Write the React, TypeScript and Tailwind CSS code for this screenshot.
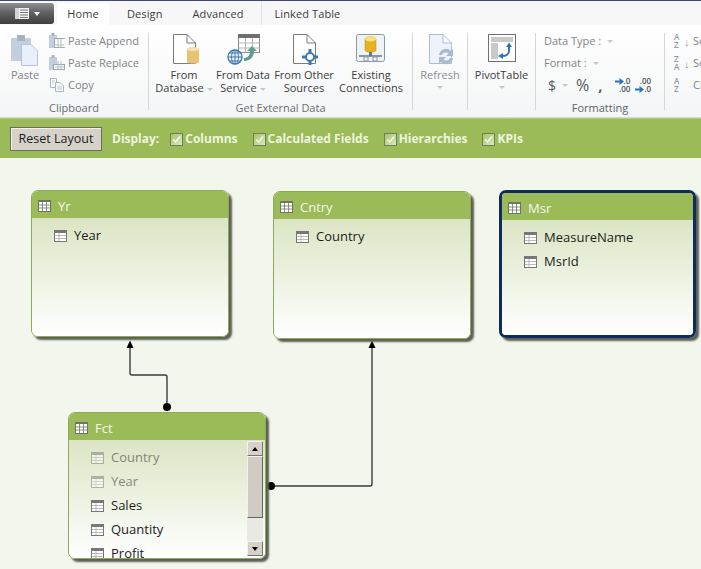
import type { ReactNode } from "react";

const font = { fontFamily: '"Open Sans", "Noto Sans", sans-serif' };

const PageIcon = ({ children, faded }: { children?: ReactNode; faded?: boolean }) => (
  <svg width="31" height="34" viewBox="0 0 31 34" className="block">
    <path
      d="M4.5 1.5H18L26.5 10V30.5H4.5Z M18 1.5V10H26.5"
      fill={faded ? "#eef3fb" : "#fff"}
      stroke={faded ? "#a9bcd8" : "#7c7c7c"}
    />
    {children}
  </svg>
);

const FromDatabaseIcon = () => (
  <PageIcon>
    <path d="M18 16C18 14 30 14 30 16V29C30 31 18 31 18 29Z" fill="#e9c273" />
    <ellipse cx="24" cy="16" rx="6" ry="2" fill="#f5e2b4" />
  </PageIcon>
);

const DataServiceIcon = () => (
  <svg width="38" height="34" viewBox="-2 0 38 34" className="block">
    <rect x="12.5" y="1.5" width="21" height="18" fill="#fff" stroke="#8a8a8a" />
    <rect x="12" y="1" width="22" height="4" fill="#6e6e6e" />
    <path d="M12.5 10H33.5M12.5 15H33.5M19.5 5V19.5M26.5 5V19.5" stroke="#b5b5b5" />
    <circle cx="9" cy="24" r="7" fill="#eaf2fb" stroke="#3f78b0" strokeWidth="1.3" />
    <path d="M2 24H16M9 17V31M4 20H14M4 28H14" stroke="#3f78b0" />
    <ellipse cx="9" cy="24" rx="3.5" ry="7" fill="none" stroke="#3f78b0" />
    <path d="M18 25C22 25 24 22 24 18H21L26 13L31 18H28C28 24 24 28 18 28Z" fill="#5e9c8c" />
  </svg>
);

const OtherSourcesIcon = () => (
  <PageIcon>
    <circle cx="21" cy="24" r="4" fill="#fff" stroke="#3f78b0" strokeWidth="2" />
    <path d="M21 16V20M21 28V32M13 24H17M25 24H29" stroke="#3f78b0" strokeWidth="3" />
  </PageIcon>
);

const ConnectionsIcon = () => (
  <svg width="32" height="32" viewBox="0 0 32 32" className="block mb-[2px]">
    <rect x="1.5" y="1.5" width="28" height="27" rx="2" fill="#eef3f8" stroke="#8a97a6" />
    <path d="M10 6C10 3 21 3 21 6V17C21 20 10 20 10 17Z" fill="#e6b21f" stroke="#b58a10" strokeWidth="0.5" />
    <ellipse cx="15.5" cy="6" rx="5.5" ry="2.4" fill="#f7e27d" />
    <rect x="14" y="19" width="3" height="4" fill="#6b7785" />
    <path d="M4 23H27" stroke="#6b7785" strokeWidth="1.5" />
    <rect x="9" y="24" width="4" height="4" fill="none" stroke="#8a97a6" />
    <rect x="18" y="24" width="4" height="4" fill="none" stroke="#8a97a6" />
  </svg>
);

const RefreshIcon = () => (
  <PageIcon faded>
    <path d="M14 22A7 7 0 0 1 26 18L28 16V23H21L23.5 20.5A4 4 0 0 0 17 22Z" fill="#a9bbcc" />
    <path d="M28 25A7 7 0 0 1 16 29L14 31V24H21L18.5 26.5A4 4 0 0 0 25 25Z" fill="#a9bbcc" />
  </PageIcon>
);

const PivotIcon = () => (
  <svg width="30" height="30" viewBox="0 0 30 30" className="block mb-[4px]">
    <rect x="1.5" y="1.5" width="27" height="27" fill="#fff" stroke="#6f6f6f" />
    <rect x="4" y="4" width="22" height="5" fill="#c9c9c9" />
    <rect x="4" y="10" width="7" height="16" fill="#c9c9c9" />
    <path d="M22 12V18C22 21 19 23 15 23" fill="none" stroke="#2e74b5" strokeWidth="2" />
    <path d="M19 14L22 9.500L25 14ZM16 20V26L11 23Z" fill="#2e74b5" />
  </svg>
);

const PasteIcon = () => (
  <svg width="28" height="31" viewBox="0 0 28 31" className="block">
    <rect x="0" y="3" width="20" height="23" fill="#c3cfde" />
    <rect x="6" y="0" width="8" height="6" fill="#a6b3c4" />
    <path d="M10.500 9.500H20L26.500 16V30.500H10.500Z" fill="#e9f0fa" stroke="#b4c4da" />
  </svg>
);

const SmallPasteIcon = ({ replace }: { replace?: boolean }) => (
  <svg width="16" height="16" viewBox="0 0 16 16" className="block">
    <rect x="0" y="2" width="8" height="13" fill="#c3cfde" />
    <rect x="2.500" y="0" width="3" height="3" fill="#a6b3c4" />
    <rect x={replace ? 4.500 : 5.500} y={replace ? 9.500 : 5.500} width="11" height={replace ? 5 : 9} fill="#fff" stroke="#9aa6b5" />
    <path d="M5.500 12H15M9 6V14.500M12 6V14.500" stroke="#b4bcc6" />
  </svg>
);

const CopyIcon = () => (
  <svg width="16" height="16" viewBox="0 0 16 16" className="block">
    <path d="M1.500 1.500H7.500V10.500H1.500Z" fill="#fff" stroke="#a8b6c8" />
    <path d="M6.500 5.500H11L14.500 9V14.500H6.500Z" fill="#fff" stroke="#a8b6c8" />
    <path d="M8 10H13M8 12H13M3 4H6M3 6H5" stroke="#b8c4d2" />
  </svg>
);

const Caret = () => (
  <span className="inline-block w-0 h-0 border-x-[3px] border-x-transparent border-t-[3px] border-t-[#c4c8cc]" />
);

const SmallArrow = () => (
  <svg width="9" height="7" viewBox="0 0 9 7" className="block shrink-0">
    <path d="M0 2.500H4.500V0L9 3.500L4.500 7V4.500H0Z" fill="#2e74b5" />
  </svg>
);

const DecimalButton = ({ top, bottom, className }: { top: ReactNode; bottom: ReactNode; className: string }) => (
  <div className={`flex flex-col items-end shrink-0 text-[8px] leading-[8px] font-semibold text-[#4a4f55] ${className}`}>
    <div className="flex items-center h-[8px]">{top}</div>
    <div className="flex items-center h-[8px]">{bottom}</div>
  </div>
);

const BigButton = ({
  icon,
  lines,
  muted,
  caret,
  width,
}: {
  icon: ReactNode;
  lines: string[];
  muted?: boolean;
  caret?: boolean;
  width: string;
}) => (
  <div className={`flex flex-col items-center shrink-0 ${width}`}>
    <div className="h-[41px] flex items-end justify-center">{icon}</div>
    <div className={`mt-px text-center leading-[13px] whitespace-nowrap ${muted ? "text-[#8b8f94]" : "text-[#3c3c3c]"}`}>
      {lines.map((line, i) => (
        <div key={line}>
          {line}
          {caret && i === lines.length - 1 && (
            <span className="ml-[3px] align-middle inline-flex">
              <Caret />
            </span>
          )}
        </div>
      ))}
    </div>
  </div>
);

const Divider = () => <div className="w-px shrink-0 my-[7px] bg-[#d4d6d8]" />;

const GroupLabel = ({ children }: { children: ReactNode }) => (
  <div className="absolute inset-x-0 bottom-[2px] text-center leading-[14px] text-[#6a6e72]">{children}</div>
);

const Ribbon = () => (
  <div className="flex h-[93px] pt-px bg-gradient-to-b from-[#ffffff] to-[#f4f5f6] text-[11px] border-b border-[#d6d8d0]">
    <div className="relative w-[148px] shrink-0 flex">
      <div className="w-[49px] pl-[11px] pt-[9px] text-[#7f8489]">
        <PasteIcon />
        <div className="mt-[2px] leading-[14px]">Paste</div>
      </div>
      <div className="pt-[7px] flex flex-col gap-[6px] text-[#7f8489]">
        <div className="flex items-center gap-[3px] h-[16px]"><SmallPasteIcon />Paste Append</div>
        <div className="flex items-center gap-[3px] h-[16px]"><SmallPasteIcon replace />Paste Replace</div>
        <div className="flex items-center gap-[3px] h-[16px]"><CopyIcon />Copy</div>
      </div>
      <GroupLabel>Clipboard</GroupLabel>
    </div>
    <Divider />
    <div className="relative w-[263px] shrink-0 flex pl-[6px]">
      <BigButton width="w-[58px]" icon={<FromDatabaseIcon />} lines={["From", "Database"]} caret />
      <BigButton width="w-[60px]" icon={<DataServiceIcon />} lines={["From Data", "Service"]} caret />
      <BigButton width="w-[62px]" icon={<OtherSourcesIcon />} lines={["From Other", "Sources"]} />
      <BigButton width="w-[72px]" icon={<ConnectionsIcon />} lines={["Existing", "Connections"]} />
      <GroupLabel>Get External Data</GroupLabel>
    </div>
    <Divider />
    <div className="w-[54px] shrink-0 flex flex-col items-center">
      <BigButton width="w-full" icon={<RefreshIcon />} lines={["Refresh"]} muted />
      <div className="mt-[5px] flex"><Caret /></div>
    </div>
    <Divider />
    <div className="w-[67px] shrink-0 flex flex-col items-center">
      <BigButton width="w-full" icon={<PivotIcon />} lines={["PivotTable"]} />
      <div className="mt-[5px] flex"><Caret /></div>
    </div>
    <Divider />
    <div className="relative w-[128px] shrink-0 pl-[8px] pt-[7px] text-[#7f8489]">
      <div className="h-[16px] flex items-center gap-[6px]">Data Type : <Caret /></div>
      <div className="mt-[6px] h-[16px] flex items-center gap-[6px]">Format : <Caret /></div>
      <div className="mt-[6px] h-[16px] flex items-center text-[#555a60]">
        <span className="w-[16px] text-center text-[14px]">$</span>
        <span className="ml-[2px] mr-[8px] flex"><Caret /></span>
        <span className="text-[16px] leading-none">%</span>
        <span className="ml-[9px] text-[15px] font-bold leading-none">,</span>
        <DecimalButton
          className="ml-[12px]"
          top={<><SmallArrow />.0</>}
          bottom=".00"
        />
        <DecimalButton
          className="ml-[5px]"
          top=".00"
          bottom={<><SmallArrow />.0</>}
        />
      </div>
      <GroupLabel><span className="text-[#5f6368]">Formatting</span></GroupLabel>
    </div>
    <Divider />
    <div className="flex-1 min-w-0 pl-[9px] pt-[7px] flex flex-col gap-[6px] text-[#7f8489] overflow-hidden">
      {[["A", "Z", "So"], ["Z", "A", "So"], ["A", "Z", "Cl"]].map(([top, bottom, label], i) => (
        <div key={i} className="flex items-center h-[16px] whitespace-nowrap">
          <div className="w-[10px] shrink-0 text-[8px] leading-[8px] font-semibold text-[#8a9aac]">
            <div>{top}</div>
            <div>{bottom}</div>
          </div>
          <div className="w-[9px] shrink-0 text-[11px] leading-none text-[#8a9aac]">{i < 2 ? "↓" : ""}</div>
          <div className="shrink-0">{label}</div>
        </div>
      ))}
    </div>
  </div>
);

const Tabs = () => (
  <div className="flex h-[25px] items-end bg-[#f7f7f7] border-t border-t-[#3c4a78] text-[11px] text-[#3c3c3c] tracking-[0.1px]">
    <div className="ml-0 mb-px w-[54px] h-[21px] rounded-r-[3px] bg-gradient-to-b from-[#8f8f8f] via-[#5e5e5e] to-[#3f3f3f] flex items-center justify-center gap-[5px]">
      <svg width="14" height="11" viewBox="0 0 14 11">
        <rect width="14" height="11" fill="#f2f2f2" />
        <path d="M5 2H13M5 4.500H13M5 7H13M5 9.500H13" stroke="#777" />
        <rect x="0" y="0" width="4" height="11" fill="#d4d4d4" />
      </svg>
      <span className="w-0 h-0 border-x-[3.500px] border-x-transparent border-t-[4px] border-t-white" />
    </div>
    <div className="ml-[3px] w-[52px] h-[22px] pt-px bg-white rounded-t-[2px] flex items-center justify-center">Home</div>
    <div className="ml-[18px] h-[22px] pt-px flex items-center">Design</div>
    <div className="ml-[30px] h-[22px] pt-px flex items-center">Advanced</div>
    <div className="ml-[17px] w-px h-[24px] bg-[#e2e2e2]" />
    <div className="ml-[13px] h-[22px] pt-px flex items-center">Linked Table</div>
  </div>
);

const CheckItem = ({ label, className }: { label: string; className: string }) => (
  <div className={`flex items-center mt-px ${className}`}>
    <span className="w-[13px] h-[13px] border border-[#6f7f52] bg-gradient-to-br from-[#a7c267] to-[#dbe7c2] flex items-center justify-center">
      <svg width="9" height="9" viewBox="0 0 9 9">
        <path d="M1 4.500L3.500 7L8 1.500" fill="none" stroke="#f4f7ea" strokeWidth="1.500" />
      </svg>
    </span>
    <span className="ml-[2px] font-bold text-[#eef4df] text-[12px]">{label}</span>
  </div>
);

const DisplayBar = () => (
  <div className="flex items-center h-[40px] bg-[#9bbb59] pl-[10px] border-t border-[#b5cd84]">
    <button className="w-[92px] h-[24px] pt-[2px] bg-[#d6d2ca] border border-[#6c6c60] text-[12.5px] text-[#1d1d1d] shadow-[inset_1px_1px_0_#f3f1ec]">
      Reset Layout
    </button>
    <span className="ml-[10px] mt-px font-bold text-[12px] text-[#eef4df]">Display:</span>
    <CheckItem label="Columns" className="ml-[11px]" />
    <CheckItem label="Calculated Fields" className="ml-[15px]" />
    <CheckItem label="Hierarchies" className="ml-[15px]" />
    <CheckItem label="KPIs" className="ml-[15px]" />
  </div>
);

const TableGlyph = ({ header }: { header?: boolean }) => (
  <svg width="13" height="12" viewBox="0 0 13 12" className="block shrink-0">
    <rect width="13" height="12" fill={header ? "#6f7760" : "#777"} />
    <rect x="1" y={header ? 2 : 3} width="11" height={header ? 9 : 8} fill="#fff" />
    <path
      d={header ? "M1 5H12M1 8H12M4.500 2V11M8.500 2V11" : "M1 5.500H12M1 8.500H12M5 3V11"}
      stroke={header ? "#6f7760" : "#aaa"}
      strokeWidth="0.8"
    />
  </svg>
);

const Column = ({ name, hidden }: { name: string; hidden?: boolean }) => (
  <div className={`flex items-center gap-[7px] h-[24px] shrink-0 ${hidden ? "opacity-50" : ""}`}>
    <TableGlyph />
    <span className="text-[13px] text-[#1c1c1c]">{name}</span>
  </div>
);

const TableCard = ({
  title,
  className,
  children,
  selected,
  columnsClass,
}: {
  title: string;
  className: string;
  children: ReactNode;
  selected?: boolean;
  columnsClass: string;
}) => (
  <div
    className={`absolute rounded-[7px] overflow-hidden flex flex-col shadow-[3px_3px_2px_#5c5f55] ${
      selected ? "border-[3px] border-[#0f2a5c]" : "border border-[#8eaa55]"
    } ${className}`}
  >
    <div className="h-[27px] pt-[2px] shrink-0 bg-[#9bbb59] flex items-center gap-[7px] pl-[6px] text-[13px] text-[#f5f8ea]">
      <TableGlyph header />
      <span className="mt-[2px]">{title}</span>
    </div>
    <div className={`flex-1 min-h-0 relative bg-gradient-to-b from-[#dbe5c4] to-[#ffffff] overflow-hidden ${columnsClass}`}>
      {children}
    </div>
  </div>
);

const ScrollBar = () => (
  <div className="absolute right-[2px] top-px bottom-[2px] w-[16px] flex flex-col bg-[#e8e8e4]">
    <div className="h-[15px] bg-[#d6d2ca] border border-[#f4f2ee] border-b-[#77756e] border-r-[#77756e] flex items-center justify-center">
      <span className="w-0 h-0 border-x-[3.500px] border-x-transparent border-b-[4px] border-b-black" />
    </div>
    <div className="h-[62px] bg-[#d0ccc4] border border-[#f4f2ee] border-b-[#66645e] border-r-[#66645e]" />
    <div className="flex-1" />
    <div className="h-[15px] bg-[#d6d2ca] border border-[#f4f2ee] border-b-[#77756e] border-r-[#77756e] flex items-center justify-center">
      <span className="w-0 h-0 border-x-[3.500px] border-x-transparent border-t-[4px] border-t-black" />
    </div>
  </div>
);

const Relationships = () => (
  <svg width="701" height="411" viewBox="0 0 701 411" className="absolute left-0 top-0 pointer-events-none">
    <path d="M130 190V215Q130 217 132 217H165Q167 217 167 219V249" fill="none" stroke="#3d3d3d" strokeWidth="1.400" />
    <path d="M126.500 190L130 182.500L133.500 190Z" fill="#000" />
    <circle cx="167" cy="249" r="4" fill="#000" />
    <path d="M271 328H370Q372 328 372 326V190" fill="none" stroke="#3d3d3d" strokeWidth="1.400" />
    <path d="M368.500 190L372 182.500L375.500 190Z" fill="#000" />
    <circle cx="271" cy="328" r="4" fill="#000" />
  </svg>
);

export default function App() {
  return (
    <div className="w-[701px] h-[569px] overflow-hidden flex flex-col bg-[#f3f6ec]" style={font}>
      <Tabs />
      <Ribbon />
      <DisplayBar />
      <div className="relative flex-1">
        <Relationships />
        <TableCard title="Yr" className="left-[31px] top-[32px] w-[198px] h-[147px]" columnsClass="pl-[22px] pt-[6px]">
          <Column name="Year" />
        </TableCard>
        <TableCard title="Cntry" className="left-[273px] top-[33px] w-[198px] h-[148px]" columnsClass="pl-[22px] pt-[6px]">
          <Column name="Country" />
        </TableCard>
        <TableCard
          selected
          title="Msr"
          className="left-[499px] top-[32px] w-[197px] h-[148px]"
          columnsClass="pl-[22px] pt-[6px]"
        >
          <Column name="MeasureName" />
          <Column name="MsrId" />
        </TableCard>
        <TableCard title="Fct" className="left-[68px] top-[254px] w-[198px] h-[147px]" columnsClass="pl-[22px] pt-[6px]">
          <Column name="Country" hidden />
          <Column name="Year" hidden />
          <Column name="Sales" />
          <Column name="Quantity" />
          <Column name="Profit" />
          <ScrollBar />
        </TableCard>
      </div>
    </div>
  );
}
